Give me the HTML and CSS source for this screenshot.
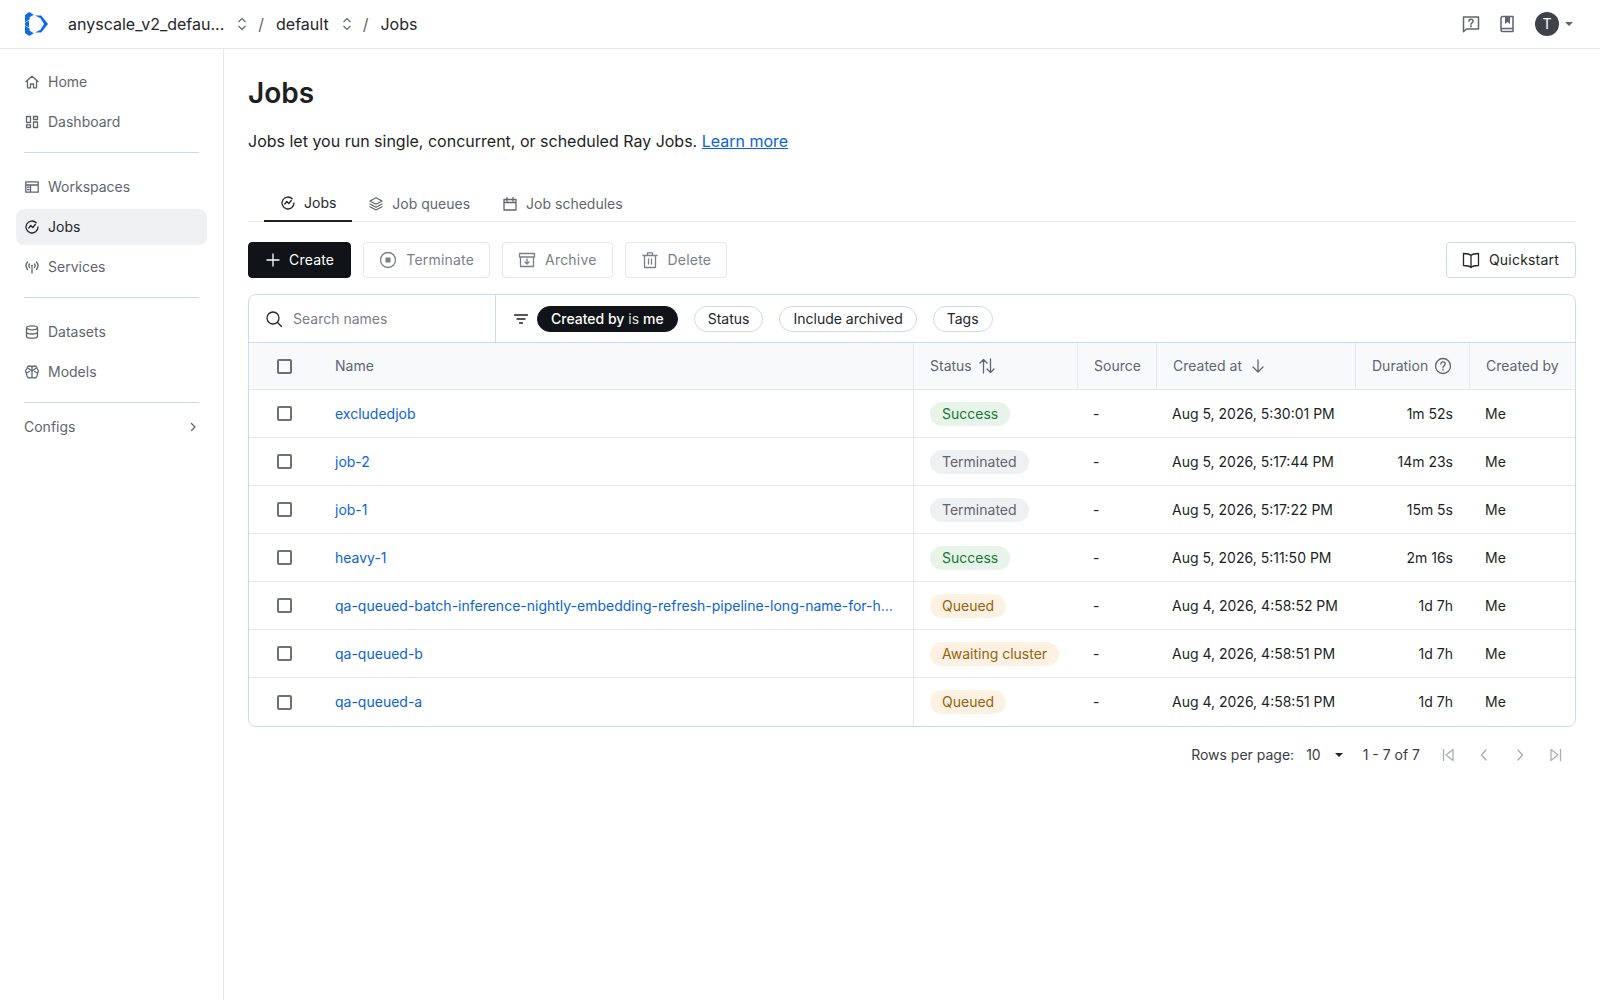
FILE: index.html
```html
<!DOCTYPE html>
<html lang="en">
<head>
    <meta charset="UTF-8">
    <title>Jobs</title>
    <link rel="stylesheet" href="styles.css">
</head>
<body>
<header class="topbar">
    <svg class="logo" width="24" height="24" viewBox="0 0 24 24">
        <path fill="#0b6cf0" d="M5.2 0 9.8 2.7 5.6 5.2V7.6L1 10.2V3z"/>
        <path fill="#0b6cf0" d="M11 3.4h6.2L24 12l-6.8 8.6H11l5.4-2.9L20 12l-3.6-5.7z"/>
        <path fill="#0b6cf0" d="M1 13.8 5.6 16.4v2.4l4.2 2.5L5.2 24 1 21z"/>
        <path fill="#0b6cf0" d="M1 10.8 5 8.5v7L1 13.2z"/>
    </svg>
    <nav class="crumbs">
        <span class="crumb crumb-first">anyscale_v2_defau...</span>
        <svg class="updown" width="12" height="16" viewBox="0 0 12 16"><path d="M2.5 6 6 2.5 9.500 6M2.5 10 6 13.500 9.500 10"/></svg>
        <span class="slash">/</span>
        <span class="crumb">default</span>
        <svg class="updown" width="12" height="16" viewBox="0 0 12 16"><path d="M2.5 6 6 2.5 9.500 6M2.500 10 6 13.500 9.500 10"/></svg>
        <span class="slash">/</span>
        <span class="crumb">Jobs</span>
    </nav>
    <div class="top-actions">
        <svg class="icon top-icon" width="20" height="20" viewBox="0 0 20 20"><path d="M2.500 3h15v12H5.500l-3 2.700z"/><path d="M8 7.300c0-2.600 4-2.600 4 0 0 1.600-2 1.500-2 3M10 11.800v1"/></svg>
        <svg class="icon top-icon" width="20" height="20" viewBox="0 0 20 20"><path d="M4 16V4a1.500 1.500 0 0 1 1.500-1.500h10.500v15H5.500A1.500 1.500 0 0 1 4 16a1.500 1.500 0 0 1 1.500-1.500H16"/><path class="solid" d="M8 3h5v7l-2.500-2L8 10z"/></svg>
        <span class="avatar">T</span>
        <span class="caret"></span>
    </div>
</header>

<div class="layout">
    <aside class="sidebar">
        <a class="side-item" href="#">
            <svg class="icon" width="16" height="16" viewBox="0 0 16 16"><path d="M2 7.500 8 2.200l6 5.300M3.500 6.500v7.300h3V10h3v3.800h3V6.500"/></svg>
            Home
        </a>
        <a class="side-item" href="#">
            <svg class="icon" width="16" height="16" viewBox="0 0 16 16"><path d="M2.500 2.500h4v6h-4zM9.500 2.500h4v3h-4zM9.500 8h4v5.500h-4zM2.500 10.800h4v2.700h-4z"/></svg>
            Dashboard
        </a>
        <div class="side-rule"></div>
        <a class="side-item" href="#">
            <svg class="icon" width="16" height="16" viewBox="0 0 16 16"><path d="M1.800 2.800h12.400v10.400H1.800zM1.800 6h12.400M6.500 6v7.200M3.500 8.200h1.500M3.500 10.500h1.500"/></svg>
            Workspaces
        </a>
        <a class="side-item side-active" href="#">
            <svg class="icon" width="16" height="16" viewBox="0 0 16 16"><path d="M14 8a6 6 0 1 1-1.800-4.300M4.800 9l2-2.500 2 2 2.500-3"/></svg>
            Jobs
        </a>
        <a class="side-item" href="#">
            <svg class="icon" width="16" height="16" viewBox="0 0 16 16"><path d="M8 8.500V14M3.500 3a6 6 0 0 0 0 7.500M12.500 3a6 6 0 0 1 0 7.500M5.500 5a3 3 0 0 0 0 3.500M10.500 5a3 3 0 0 1 0 3.500"/><circle class="solid" cx="8" cy="6.800" r="1"/></svg>
            Services
        </a>
        <div class="side-rule"></div>
        <a class="side-item" href="#">
            <svg class="icon" width="16" height="16" viewBox="0 0 16 16"><ellipse cx="8" cy="3.800" rx="5.500" ry="2"/><path d="M2.500 3.800v8.400c0 1.100 2.500 2 5.500 2s5.500-.9 5.500-2V3.800M2.500 8c0 1.100 2.500 2 5.500 2s5.500-.9 5.500-2"/></svg>
            Datasets
        </a>
        <a class="side-item" href="#">
            <svg class="icon" width="16" height="16" viewBox="0 0 16 16"><path d="M8 3V13.500M5.500 2A2.500 2.500 0 0 0 3 4.500C1.500 5.500 1.200 8 2.500 9 2.500 12 4 14 5.800 14c1.200 0 2.200-.8 2.200-1.500.0.7 1 1.500 2.200 1.500 1.800 0 3.300-2 3.300-5 1.300-1 1-3.500-.5-4.500A2.500 2.500 0 0 0 10.500 2C9.200 2 8 2.800 8 3.500 8 2.800 6.800 2 5.500 2zM2.500 9 5.500 7.500M13.500 9 10.500 7.500M4.500 4.500 8 7l3.500-2.500"/></svg>
            Models
        </a>
        <div class="side-rule side-rule-low"></div>
        <a class="side-group" href="#">
            Configs
            <svg class="icon" width="12" height="12" viewBox="0 0 12 12"><path d="M4.500 2.500 8 6 4.500 9.500"/></svg>
        </a>
    </aside>

    <main class="content">
        <h1 class="title">Jobs</h1>
        <p class="intro">Jobs let you run single, concurrent, or scheduled Ray Jobs. <a href="#">Learn more</a></p>

        <div class="tabs">
            <a class="tab tab-active" href="#">
                <svg class="icon" width="16" height="16" viewBox="0 0 16 16"><path d="M14 8a6 6 0 1 1-1.800-4.300M4.800 9l2-2.500 2 2 2.500-3"/></svg>
                Jobs
            </a>
            <a class="tab" href="#">
                <svg class="icon" width="16" height="16" viewBox="0 0 16 16"><path d="M8 1.800 14 5 8 8.200 2 5zM2 8l6 3.200L14 8M2 10.800 8 14l6-3.200"/></svg>
                Job queues
            </a>
            <a class="tab" href="#">
                <svg class="icon" width="16" height="16" viewBox="0 0 16 16"><path d="M2 3.500h12v10.500H2zM2 6.500h12M5 1.500v3.500M11 1.500v3.500"/></svg>
                Job schedules
            </a>
        </div>

        <div class="toolbar">
            <button class="btn btn-dark">
                <svg class="icon" width="16" height="16" viewBox="0 0 16 16"><path d="M8 2v12M2 8h12"/></svg>
                Create
            </button>
            <button class="btn btn-off">
                <svg class="icon" width="20" height="20" viewBox="0 0 20 20"><circle cx="10" cy="10" r="7.500"/><rect class="solid" x="7.500" y="7.500" width="5" height="5" rx=".5"/></svg>
                Terminate
            </button>
            <button class="btn btn-off">
                <svg class="icon" width="20" height="20" viewBox="0 0 20 20"><path d="M2.500 3.500h15v3.500h-15zM3.500 7v9.500h13V7M10 9v5M8 12l2 2 2-2"/></svg>
                Archive
            </button>
            <button class="btn btn-off">
                <svg class="icon" width="20" height="20" viewBox="0 0 20 20"><path d="M3 5.500h14M7.500 5.500V2.800h5v2.700M4.500 5.500v12h11v-12M8.500 9v5M11.500 9v5"/></svg>
                Delete
            </button>
            <button class="btn btn-quick">
                <svg class="icon" width="20" height="20" viewBox="0 0 20 20"><path d="M10 5.500C8.500 3.800 5 3.500 2.500 3.500v12c2.500 0 6 .3 7.500 2 1.500-1.700 5-2 7.500-2v-12c-2.500 0-6 .3-7.500 2zM10 5.500v12"/></svg>
                Quickstart
            </button>
        </div>

        <section class="panel">
            <div class="filters">
                <label class="search">
                    <svg class="icon" width="18" height="18" viewBox="0 0 18 18"><circle cx="8" cy="8" r="6"/><path d="m12.500 12.500 4 4"/></svg>
                    <input type="text" placeholder="Search names">
                </label>
                <div class="chips">
                    <svg class="icon" width="16" height="16" viewBox="0 0 16 16"><path d="M1.500 4h13M4 8h8M6.500 12h3"/></svg>
                    <span class="chip chip-on"><b>Created by</b> is <b>me</b></span>
                    <span class="chip">Status</span>
                    <span class="chip">Include archived</span>
                    <span class="chip">Tags</span>
                </div>
            </div>
            <table class="jobs">
                <colgroup>
                    <col class="c-check"><col class="c-name"><col class="c-status"><col class="c-source"><col class="c-created"><col class="c-duration"><col class="c-by">
                </colgroup>
                <thead>
                    <tr>
                        <th class="cell-check"><span class="box"></span></th>
                        <th class="cell-name">Name</th>
                        <th class="rule-left"><span class="th-inner">Status
                            <svg class="icon" width="18" height="18" viewBox="0 0 18 18"><path d="M5.500 16V2.500M2 6l3.500-3.500L9 6M12.500 2v13.500M9 12l3.500 3.500L16 12"/></svg></span></th>
                        <th class="rule-left">Source</th>
                        <th class="rule-left"><span class="th-inner th-wide">Created at
                            <svg class="icon" width="16" height="16" viewBox="0 0 16 16"><path d="M8 2v12M3 9l5 5 5-5"/></svg></span></th>
                        <th class="rule-left"><span class="th-inner">Duration
                            <svg class="icon" width="18" height="18" viewBox="0 0 18 18"><circle cx="9" cy="9" r="7.500"/><path d="M6.800 7c0-2.900 4.400-2.900 4.400 0 0 1.800-2.200 1.700-2.200 3.500M9 12.200v1"/></svg></span></th>
                        <th class="rule-left">Created by</th>
                    </tr>
                </thead>
                <tbody>
                    <tr>
                        <td class="cell-check"><span class="box"></span></td>
                        <td class="cell-name"><a href="#">excludedjob</a></td>
                        <td class="rule-left"><span class="pill pill-ok">Success</span></td>
                        <td>-</td>
                        <td>Aug 5, 2026, 5:30:01 PM</td>
                        <td class="num">1m 52s</td>
                        <td>Me</td>
                    </tr>
                    <tr>
                        <td class="cell-check"><span class="box"></span></td>
                        <td class="cell-name"><a href="#">job-2</a></td>
                        <td class="rule-left"><span class="pill pill-off">Terminated</span></td>
                        <td>-</td>
                        <td>Aug 5, 2026, 5:17:44 PM</td>
                        <td class="num">14m 23s</td>
                        <td>Me</td>
                    </tr>
                    <tr>
                        <td class="cell-check"><span class="box"></span></td>
                        <td class="cell-name"><a href="#">job-1</a></td>
                        <td class="rule-left"><span class="pill pill-off">Terminated</span></td>
                        <td>-</td>
                        <td>Aug 5, 2026, 5:17:22 PM</td>
                        <td class="num">15m 5s</td>
                        <td>Me</td>
                    </tr>
                    <tr>
                        <td class="cell-check"><span class="box"></span></td>
                        <td class="cell-name"><a href="#">heavy-1</a></td>
                        <td class="rule-left"><span class="pill pill-ok">Success</span></td>
                        <td>-</td>
                        <td>Aug 5, 2026, 5:11:50 PM</td>
                        <td class="num">2m 16s</td>
                        <td>Me</td>
                    </tr>
                    <tr>
                        <td class="cell-check"><span class="box"></span></td>
                        <td class="cell-name"><a class="clip" href="#">qa-queued-batch-inference-nightly-embedding-refresh-pipeline-long-name-for-historical-backfill</a></td>
                        <td class="rule-left"><span class="pill pill-wait">Queued</span></td>
                        <td>-</td>
                        <td>Aug 4, 2026, 4:58:52 PM</td>
                        <td class="num">1d 7h</td>
                        <td>Me</td>
                    </tr>
                    <tr>
                        <td class="cell-check"><span class="box"></span></td>
                        <td class="cell-name"><a href="#">qa-queued-b</a></td>
                        <td class="rule-left"><span class="pill pill-wait">Awaiting cluster</span></td>
                        <td>-</td>
                        <td>Aug 4, 2026, 4:58:51 PM</td>
                        <td class="num">1d 7h</td>
                        <td>Me</td>
                    </tr>
                    <tr>
                        <td class="cell-check"><span class="box"></span></td>
                        <td class="cell-name"><a href="#">qa-queued-a</a></td>
                        <td class="rule-left"><span class="pill pill-wait">Queued</span></td>
                        <td>-</td>
                        <td>Aug 4, 2026, 4:58:51 PM</td>
                        <td class="num">1d 7h</td>
                        <td>Me</td>
                    </tr>
                </tbody>
            </table>
        </section>

        <div class="pager">
            <span>Rows per page:</span>
            <span class="pager-size">10</span>
            <span class="caret caret-dark"></span>
            <span class="pager-range">1 - 7 of 7</span>
            <div class="pager-btns">
                <svg class="icon" width="16" height="16" viewBox="0 0 16 16"><path d="M3.500 2.500v11M13 2.500v11L6 8z"/></svg>
                <svg class="icon" width="16" height="16" viewBox="0 0 16 16"><path d="M10 3 5.500 8l4.500 5"/></svg>
                <svg class="icon" width="16" height="16" viewBox="0 0 16 16"><path d="M6 3l4.500 5L6 13"/></svg>
                <svg class="icon" width="16" height="16" viewBox="0 0 16 16"><path d="M12.500 2.500v11M3 2.500v11L10 8z"/></svg>
            </div>
        </div>
    </main>
</div>
</body>
</html>
```

FILE: styles.css
```css
* {
    box-sizing: border-box;
}
body {
    margin: 0;
    background: #fff;
    color: #1d1f24;
    font-family: Inter, "Liberation Sans", sans-serif;
    font-size: 14px;
    line-height: 20px;
}
a {
    color: inherit;
    text-decoration: none;
}
.icon {
    flex: none;
    fill: none;
    stroke: currentColor;
    stroke-width: 1.3;
    stroke-linejoin: round;
    stroke-linecap: round;
}
.icon .solid,
.solid {
    fill: currentColor;
    stroke: none;
}

/* top bar */
.topbar {
    height: 49px;
    display: flex;
    align-items: center;
    padding: 0 24px;
    border-bottom: 1px solid #e4e8ee;
}
.logo {
    flex: none;
}
.crumbs {
    display: flex;
    align-items: center;
    margin-left: 20px;
    font-size: 16px;
}
.crumb {
    color: #24262b;
}
.updown {
    margin-left: 12px;
    fill: none;
    stroke: #5f6670;
    stroke-width: 1.2;
}
.slash {
    margin: 0 12px 0 10px;
    color: #5f6670;
}
.top-actions {
    margin-left: auto;
    display: flex;
    align-items: center;
    color: #5f6670;
}
.top-icon {
    margin-right: 16px;
    stroke-width: 1.5;
}
.avatar {
    width: 24px;
    height: 24px;
    margin-left: 2px;
    border-radius: 50%;
    background: #3f4349;
    color: #fff;
    font-size: 14px;
    text-align: center;
    line-height: 24px;
}
.caret {
    width: 0;
    height: 0;
    margin: 0 3px 0 6px;
    border-left: 4px solid transparent;
    border-right: 4px solid transparent;
    border-top: 4px solid #5f6670;
}

/* page */
.layout {
    display: flex;
    min-height: 951px;
}
.sidebar {
    flex: none;
    width: 224px;
    padding: 15px 16px;
    border-right: 1px solid #e4e8ee;
    color: #5f6670;
}
.side-item {
    display: flex;
    align-items: center;
    gap: 8px;
    height: 36px;
    margin-bottom: 4px;
    padding: 0 8px;
    border-radius: 8px;
}
.side-active {
    background: #eff0f2;
    color: #24262b;
}
.side-rule {
    height: 1px;
    margin: 12px 8px 16px;
    background: #cfdae8;
}
.side-rule-low {
    margin-bottom: 6px;
}
.side-group {
    display: flex;
    align-items: center;
    justify-content: space-between;
    height: 36px;
    padding: 0 8px;
}
.content {
    flex: 1;
    min-width: 0;
    padding: 24px 24px 0;
}
.title {
    margin: 0;
    font-size: 28px;
    line-height: 40px;
    font-weight: 600;
}
.intro {
    margin: 16px 0 0;
    font-size: 16px;
    line-height: 24px;
}
.intro a {
    color: #0b63d8;
    text-decoration: underline;
}

/* tabs */
.tabs {
    display: flex;
    margin-top: 32px;
    border-bottom: 1px solid #e4e8ee;
}
.tab {
    display: flex;
    align-items: center;
    gap: 8px;
    height: 37px;
    margin-bottom: -1px;
    padding: 0 16px;
    color: #5f6670;
}
.tab-active {
    margin-left: 16px;
    border-bottom: 2px solid #1d1f24;
    color: #24262b;
}

/* buttons */
.toolbar {
    display: flex;
    gap: 12px;
    margin-top: 20px;
}
.btn {
    display: flex;
    align-items: center;
    gap: 8px;
    height: 36px;
    padding: 0 16px;
    border: 1px solid #e4e8ee;
    border-radius: 4px;
    background: #fff;
    font: inherit;
    letter-spacing: .2px;
}
.btn-dark {
    border-color: #101418;
    background: #101418;
    color: #fff;
    gap: 8px;
}
.btn-off {
    padding: 0 15px 0 14px;
    color: #7b8088;
}
.btn-quick {
    margin-left: auto;
    padding: 0 16px 0 14px;
    border-color: #cfdae8;
    color: #24262b;
}

/* table panel */
.panel {
    margin-top: 16px;
    border: 1px solid #cfdae8;
    border-radius: 8px;
    overflow: hidden;
}
.filters {
    display: flex;
    height: 48px;
    border-bottom: 1px solid #cfdae8;
}
.search {
    flex: none;
    width: 247px;
    display: flex;
    align-items: center;
    gap: 8px;
    padding-left: 16px;
    border-right: 1px solid #cfdae8;
    color: #24262b;
}
.search input {
    width: 180px;
    border: 0;
    outline: 0;
    font: inherit;
}
.search input::placeholder {
    color: #7b8088;
    opacity: 1;
}
.chips {
    display: flex;
    align-items: center;
    gap: 16px;
    padding-left: 17px;
}
.chips .icon {
    margin-right: -8px;
}
.chip {
    height: 26px;
    padding: 0 13px;
    border: 1px solid #cfdae8;
    border-radius: 13px;
    line-height: 24px;
    color: #24262b;
}
.chip-on {
    border-color: #101418;
    background: #101418;
    color: #dfe1e5;
}
.chip-on b {
    color: #fff;
    font-weight: 500;
}
.jobs {
    width: 100%;
    table-layout: fixed;
    border-spacing: 0;
}
.c-check { width: 60px; }
.c-name { width: 604px; }
.c-status { width: 164px; }
.c-source { width: 79px; }
.c-created { width: 199px; }
.c-duration { width: 114px; }
.jobs th,
.jobs td {
    height: 48px;
    padding: 0 16px;
    border-bottom: 1px solid #e4e8ee;
    text-align: left;
    white-space: nowrap;
}
.jobs tbody tr:last-child td {
    border-bottom: 0;
}
.jobs th {
    height: 47px;
    background: #f7f9fb;
    color: #5f6670;
    font-weight: 400;
    border-left: 1px solid transparent;
}
.jobs th.rule-left,
.jobs td.rule-left {
    border-left: 1px solid #e4e8ee;
}
.jobs th.cell-check,
.jobs th.cell-name,
.jobs td.cell-check,
.jobs td.cell-name {
    border-left: 0;
}
.jobs .cell-check {
    padding: 0 0 0 28px;
}
.jobs .cell-name {
    padding: 0 20px 0 26px;
}
.cell-name a {
    color: #0b63d8;
}
.clip {
    display: block;
    overflow: hidden;
    text-overflow: ellipsis;
}
.box {
    display: block;
    width: 15px;
    height: 15px;
    border: 2px solid #6c7077;
    border-radius: 2px;
}
.th-inner {
    display: flex;
    align-items: center;
    gap: 6px;
}
.th-wide {
    gap: 8px;
}
.jobs .num {
    text-align: right;
}
.pill {
    display: inline-block;
    height: 24px;
    padding: 0 12px;
    border-radius: 12px;
    line-height: 24px;
}
.pill-ok {
    background: #e8f4ea;
    color: #157a30;
}
.pill-off {
    background: #eff0f2;
    color: #5f6670;
}
.pill-wait {
    background: #fdf1e3;
    color: #96620b;
}

/* pager */
.pager {
    display: flex;
    align-items: center;
    justify-content: flex-end;
    height: 56px;
    color: #3a3d43;
}
.pager-size {
    margin-left: 12px;
}
.caret-dark {
    margin: 0 0 0 14px;
    border-top-color: #24262b;
}
.pager-range {
    margin-left: 20px;
}
.pager-btns {
    display: flex;
    gap: 20px;
    margin: 0 12px 0 20px;
    color: #a9adb3;
}
```
